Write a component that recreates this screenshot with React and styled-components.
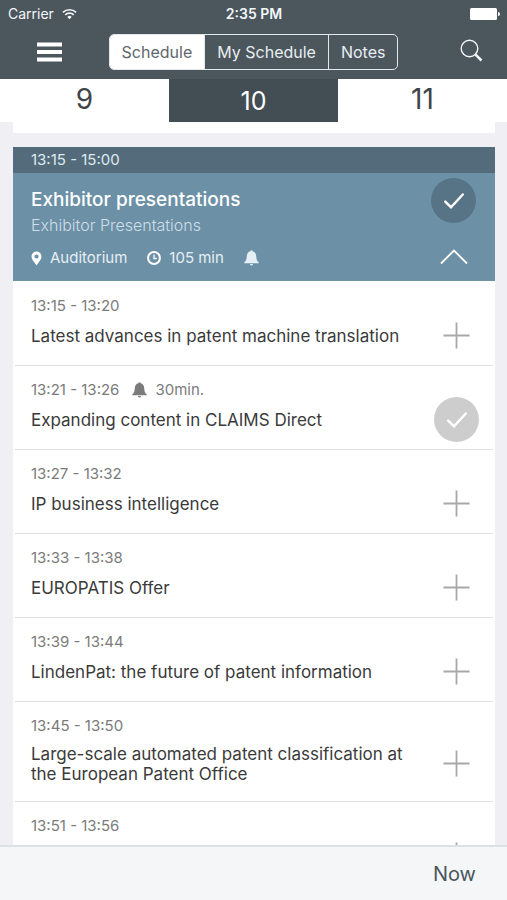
import React, { useState } from 'react';
import styled, { createGlobalStyle } from 'styled-components';

const GlobalStyle = createGlobalStyle`
    * {
        box-sizing: border-box;
    }

    body {
        margin: 0;
        background: #efeff4;
        font-family: Inter, "Liberation Sans", sans-serif;
        color: #3a3a3a;
    }

    button {
        margin: 0;
        padding: 0;
        border: 0;
        background: none;
        color: inherit;
        font: inherit;
        cursor: pointer;
    }

    svg {
        display: block;
    }
`;

const Screen = styled.div`
    display: flex;
    flex-direction: column;
    height: 100vh;
`;

const Header = styled.header`
    background: #4b565d;
    color: #f3f6f8;
`;

const StatusBar = styled.div`
    display: grid;
    grid-template-columns: 1fr auto 1fr;
    align-items: center;
    height: 28px;
    padding: 0 7px 0 8px;
    font-size: 14px;
    line-height: 20px;

    .carrier {
        display: flex;
        align-items: center;
        gap: 8px;
    }

    .clock {
        font-weight: 600;
    }

    .battery {
        justify-self: end;
    }
`;

const NavBar = styled.nav`
    display: grid;
    grid-template-columns: 1fr auto 1fr;
    align-items: center;
    height: 51px;
    padding: 0 24px 3px 24px;

    .menu {
        padding-left: 13px;
    }
`;

const IconButton = styled.button`
    justify-self: ${(props) => props.$side};
`;

const Segments = styled.div`
    display: flex;
    height: 36px;
    border: 1px solid #e3e8eb;
    border-radius: 5px;
    overflow: hidden;
`;

const Segment = styled.button`
    padding: 0 12px;
    font-size: 16px;
    background: ${(props) => (props.$active ? '#fff' : 'transparent')};
    color: ${(props) => (props.$active ? '#5d666c' : '#e9eef1')};

    & + & {
        border-left: 1px solid #e3e8eb;
    }
`;

const Days = styled.div`
    display: flex;
    height: 43px;
    background: #fff;
`;

const Day = styled.button`
    flex: 1;
    padding-bottom: ${(props) => (props.$active ? 0 : 4)}px;
    font-size: ${(props) => (props.$active ? 25 : 28)}px;
    background: ${(props) => (props.$active ? '#424d54' : '#fff')};
    color: ${(props) => (props.$active ? '#fff' : '#3d454a')};
`;

const Agenda = styled.main`
    flex: 1;
    min-height: 0;
    overflow: hidden;
    padding: 0 12px 0 13px;
`;

const PreviousCard = styled.div`
    height: 11px;
    margin-bottom: 14px;
    background: #fff;
`;

const Card = styled.section`
    background: #fff;
`;

const CardTime = styled.div`
    padding: 0 18px;
    background: #536b7a;
    color: #dfe9f0;
    font-size: 15px;
    line-height: 26px;
`;

const CardHead = styled.div`
    display: flex;
    justify-content: space-between;
    height: 108px;
    padding: 5px 19px 13px 18px;
    background: #6c90a6;
    color: #e6eff5;

    .info {
        padding-top: 10px;
    }

    .actions {
        display: flex;
        flex-direction: column;
        align-items: center;
        gap: 26px;
    }

    h2 {
        margin: 0;
        color: #fff;
        font-size: 19px;
        font-weight: 500;
        line-height: 24px;
    }

    p {
        margin: 0;
        color: #cfdee8;
        font-size: 16px;
        font-weight: 300;
        line-height: 26px;
    }
`;

const Meta = styled.div`
    display: flex;
    gap: 20px;
    margin-top: 10px;
    font-size: 15px;
    line-height: 20px;
`;

const MetaItem = styled.span`
    display: flex;
    align-items: center;
    gap: 8px;
`;

const List = styled.ul`
    margin: 0;
    padding: 1px 2px 0;
    list-style: none;
`;

const Row = styled.li`
    display: flex;
    align-items: center;
    justify-content: space-between;
    border-bottom: 1px solid #dfe0e2;
    padding: 0 14px 0 16px;
`;

const Talk = styled.div`
    padding: 16px 0 17px;

    h3 {
        display: flex;
        align-items: center;
        min-height: 24px;
        max-width: 384px;
        margin: 10px 0 0;
        font-size: 17px;
        font-weight: 400;
        line-height: 20px;
    }
`;

const TalkTime = styled.div`
    display: flex;
    align-items: center;
    height: 16px;
    color: #7b7b7b;
    font-size: 15px;
    line-height: 16px;

    svg {
        margin: 0 8px 0 13px;
    }
`;

const Toggle = styled.button`
    display: flex;
    flex: none;
    align-items: center;
    justify-content: center;
    width: 45px;
    height: 45px;
    border-radius: 50%;
    background: ${(props) => props.$fill || 'transparent'};
    color: ${(props) => (props.$fill ? '#fff' : '#a8a8a8')};

    ${Row} & {
        margin-top: 24px;
    }
`;

const Footer = styled.footer`
    display: flex;
    align-items: center;
    justify-content: flex-end;
    height: 55px;
    padding: 0 31px;
    border-top: 2px solid #dfe0e3;
    background: #f5f6f8;
    color: #4b565d;
    font-size: 20px;
`;

const Bell = () => (
    <svg width="15" height="16" viewBox="0 0 15 16" fill="currentColor">
        <path d="M7.500 0.300c.6 0 1 .4 1.100 1C10.900 1.800 12 3.600 12.200 6c.2 3.600.7 5 2.500 6.200v1.100H.3v-1.100C2.100 11 2.600 9.600 2.800 6 3 3.600 4.100 1.800 6.400 1.300c.1-.6.5-1 1.100-1z" />
        <path d="M6 13.900h3a1.500 1.500 0 0 1-3 0z" />
    </svg>
);

const Check = () => (
    <svg width="20" height="16" viewBox="0 0 20 16" fill="none" stroke="currentColor" strokeWidth="2.400">
        <path d="M1.200 8.600 L7 14.200 L18.800 1.500" strokeLinecap="round" />
    </svg>
);

const Plus = () => (
    <svg width="27" height="27" viewBox="0 0 27 27" stroke="currentColor" strokeWidth="1.800">
        <path d="M13.500 0.500V26.500M0.500 13.500H26.500" />
    </svg>
);

const segments = ['Schedule', 'My Schedule', 'Notes'];
const days = [9, 10, 11];

const talks = [
    { time: '13:15 - 13:20', title: 'Latest advances in patent machine translation' },
    { time: '13:21 - 13:26', title: 'Expanding content in CLAIMS Direct', reminder: '30min.', saved: true },
    { time: '13:27 - 13:32', title: 'IP business intelligence' },
    { time: '13:33 - 13:38', title: 'EUROPATIS Offer' },
    { time: '13:39 - 13:44', title: 'LindenPat: the future of patent information' },
    { time: '13:45 - 13:50', title: 'Large-scale automated patent classification at the European Patent Office' },
    { time: '13:51 - 13:56', title: '' },
];

export default function App() {
    const [segment, setSegment] = useState('Schedule');
    const [day, setDay] = useState(10);
    const [saved, setSaved] = useState(talks.filter((t) => t.saved).map((t) => t.time));

    const toggleTalk = (time) => {
        setSaved(saved.includes(time) ? saved.filter((t) => t !== time) : [...saved, time]);
    };

    return (
        <Screen>
            <GlobalStyle />
            <Header>
                <StatusBar>
                    <span className="carrier">
                        Carrier
                        <svg width="15" height="12" viewBox="0 0 16 12" fill="none" stroke="currentColor" strokeWidth="1.800">
                            <path d="M1 4.300a10 10 0 0 1 14 0M3.500 7a6.400 6.400 0 0 1 9 0" />
                            <path d="M8 11.500 5.700 9.100a3.300 3.300 0 0 1 4.600 0z" fill="currentColor" stroke="none" />
                        </svg>
                    </span>
                    <span className="clock">2:35 PM</span>
                    <svg className="battery" width="30" height="12" viewBox="0 0 30 12" fill="#fff">
                        <rect width="27" height="12" rx="1.500" />
                        <path d="M28 4a2 2 0 0 1 0 4z" />
                    </svg>
                </StatusBar>
                <NavBar>
                    <IconButton $side="start" className="menu" aria-label="Menu">
                        <svg width="25" height="20" viewBox="0 0 25 20" fill="#fff">
                            <path d="M0 0.500h25v4H0zM0 8h25v4H0zM0 15.500h25v4H0z" />
                        </svg>
                    </IconButton>
                    <Segments>
                        {segments.map((name) => (
                            <Segment key={name} $active={name === segment} onClick={() => setSegment(name)}>
                                {name}
                            </Segment>
                        ))}
                    </Segments>
                    <IconButton $side="end" aria-label="Search">
                        <svg width="23" height="26" viewBox="0 0 23 26" fill="none" stroke="currentColor">
                            <circle cx="9.500" cy="9.500" r="8.300" strokeWidth="1.400" />
                            <path d="M15.300 15.300 L21.500 21.500" strokeWidth="2.600" />
                        </svg>
                    </IconButton>
                </NavBar>
            </Header>
            <Days>
                {days.map((d) => (
                    <Day key={d} $active={d === day} onClick={() => setDay(d)}>
                        {d}
                    </Day>
                ))}
            </Days>
            <Agenda>
                <PreviousCard />
                <Card>
                    <CardTime>13:15 - 15:00</CardTime>
                    <CardHead>
                        <div className="info">
                            <h2>Exhibitor presentations</h2>
                            <p>Exhibitor Presentations</p>
                            <Meta>
                                <MetaItem>
                                    <svg width="11" height="15" viewBox="0 0 11 15" fill="#fff" fillRule="evenodd">
                                        <path d="M5.500 0.500a5 5 0 0 1 5 5c0 3-2.700 5.500-5 9-2.300-3.500-5-6-5-9a5 5 0 0 1 5-5zM5.500 3.400a2.100 2.100 0 1 0 0 4.200 2.100 2.100 0 0 0 0-4.200z" />
                                    </svg>
                                    Auditorium
                                </MetaItem>
                                <MetaItem>
                                    <svg width="14" height="14" viewBox="0 0 14 14" fill="none" stroke="#fff">
                                        <circle cx="7" cy="7" r="5.900" strokeWidth="2" />
                                        <path d="M7 3.500V7.500H9.800" strokeWidth="1.300" />
                                    </svg>
                                    105 min
                                </MetaItem>
                                <MetaItem>
                                    <Bell />
                                </MetaItem>
                            </Meta>
                        </div>
                        <div className="actions">
                            <Toggle $fill="#577386" aria-label="Session in my schedule">
                                <Check />
                            </Toggle>
                            <button aria-label="Collapse">
                                <svg width="28" height="16" viewBox="0 0 28 16" fill="none" stroke="#fff" strokeWidth="1.800">
                                    <path d="M1 14.500 L14 1.500 L27 14.500" />
                                </svg>
                            </button>
                        </div>
                    </CardHead>
                    <List>
                        {talks.map((talk) => {
                            const isSaved = saved.includes(talk.time);
                            return (
                                <Row key={talk.time}>
                                    <Talk>
                                        <TalkTime>
                                            {talk.time}
                                            {talk.reminder && <Bell />}
                                            {talk.reminder}
                                        </TalkTime>
                                        <h3>{talk.title}</h3>
                                    </Talk>
                                    <Toggle
                                        $fill={isSaved ? '#cdcdcd' : null}
                                        aria-label="Add to my schedule"
                                        aria-pressed={isSaved}
                                        onClick={() => toggleTalk(talk.time)}
                                    >
                                        {isSaved ? <Check /> : <Plus />}
                                    </Toggle>
                                </Row>
                            );
                        })}
                    </List>
                </Card>
            </Agenda>
            <Footer>
                <button>Now</button>
            </Footer>
        </Screen>
    );
}
